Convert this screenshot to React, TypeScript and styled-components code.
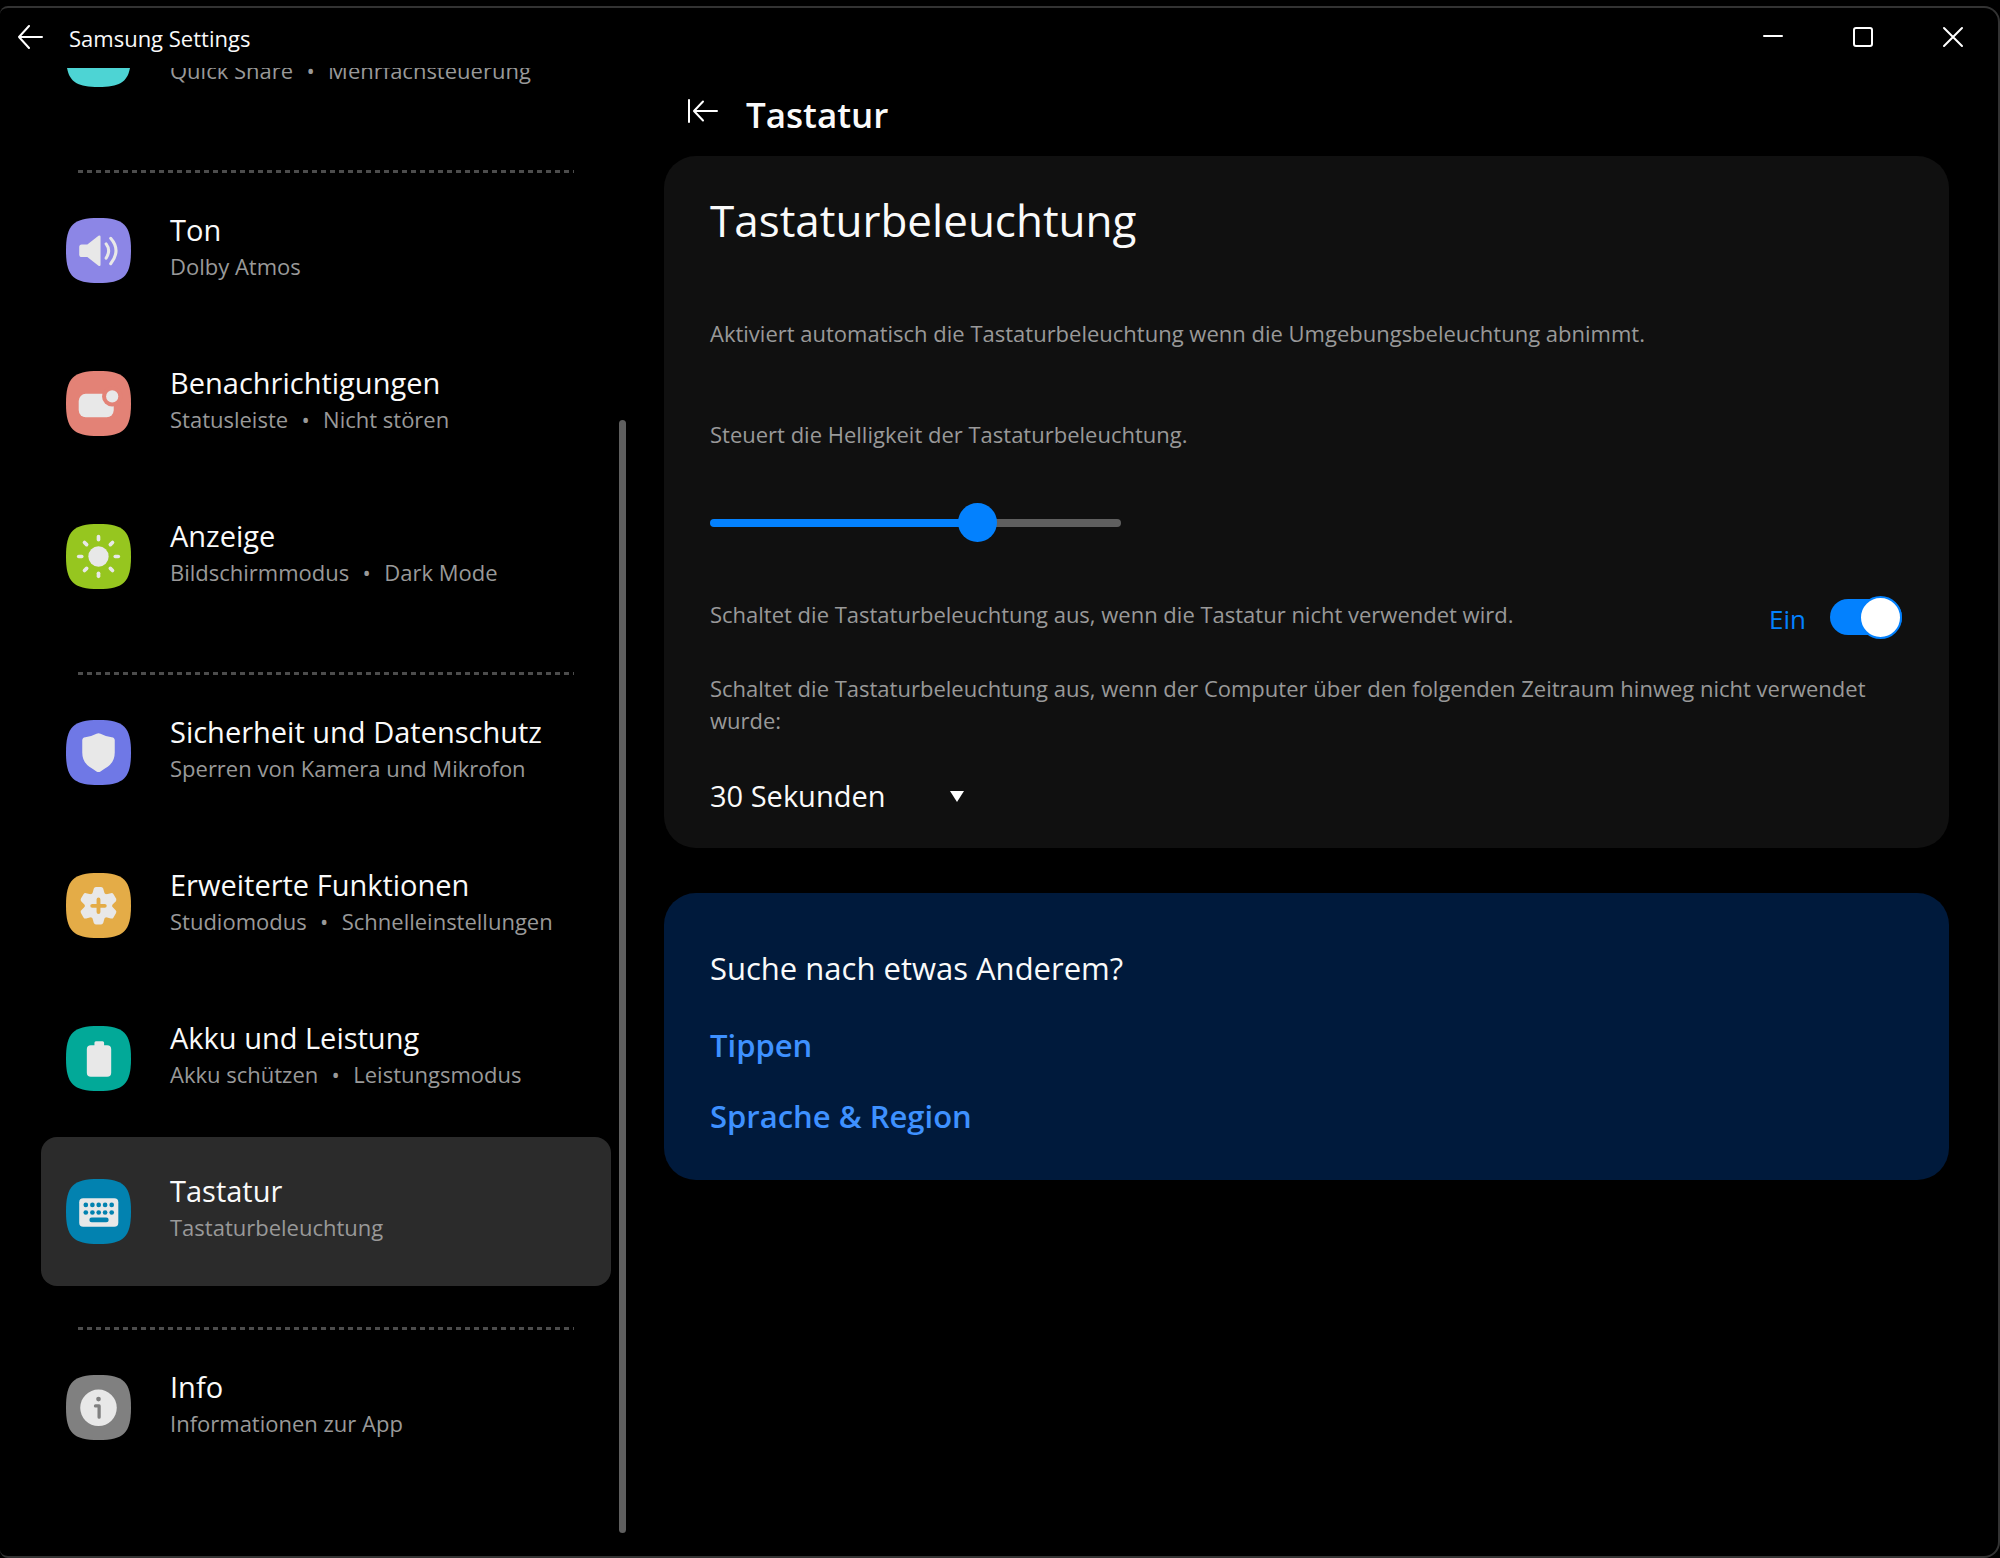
import React, { useLayoutEffect, useRef, useState } from "react";
import styled, { createGlobalStyle } from "styled-components";

const color = {
  bg: "#000000",
  frame: "#333333",
  card: "#101010",
  selected: "#2b2b2b",
  related: "#001a3c",
  text: "#fafafa",
  muted: "#999999",
  accent: "#0381fe",
  link: "#3e91ff",
  glyph: "#e8e8e8",
  track: "#5f5f5f",
};

const GlobalStyle = createGlobalStyle`
  *, *::before, *::after { box-sizing: border-box; }
  html, body { margin: 0; background: ${color.bg}; }
  body, button, select, input {
    font-family: "Open Sans", "Noto Sans", sans-serif;
    color: ${color.text};
  }
`;

const Window = styled.div`
  display: flex;
  flex-direction: column;
  height: calc(100vh - 6px);
  margin-top: 6px;
  background: ${color.bg};
  border: 2px solid ${color.frame};
  border-left: 0;
  border-radius: 8px 16px 16px 8px;
  overflow: hidden;
`;

const TitleBar = styled.header`
  display: flex;
  align-items: center;
  flex: none;
  height: 60px;
  padding: 0 12px;
`;

const IconButton = styled.button`
  display: inline-flex;
  align-items: center;
  justify-content: center;
  width: 36px;
  height: 44px;
  padding: 0 0 2px;
  border: 0;
  background: none;
  cursor: pointer;
`;

const AppTitle = styled.span`
  flex: 1;
  padding-left: 21px;
  font-size: 22px;
  line-height: 32px;
`;

const WindowControls = styled.div`
  display: flex;
  gap: 54px;
  padding-right: 15px;
`;

const Body = styled.div`
  display: grid;
  grid-template-columns: 628px minmax(0, 1fr);
  flex: 1;
  min-height: 0;
`;

const Sidebar = styled.div`
  display: flex;
  min-height: 0;
`;

const Nav = styled.nav`
  flex: 1;
  overflow-y: auto;
  scrollbar-width: none;
  padding: 0 8px 74px 41px;
`;

const ScrollRail = styled.div`
  display: flex;
  flex-direction: column;
  justify-content: flex-end;
  width: 9px;
  padding: 0 2px 23px 0;
`;

const ScrollThumb = styled.div`
  height: 76%;
  border-radius: 4px;
  background: ${color.track};
`;

const Group = styled.ul`
  display: flex;
  flex-direction: column;
  gap: 4px;
  margin: 0;
  padding: 0;
  list-style: none;
`;

const Separator = styled.hr`
  height: 3px;
  margin: 41px 37px 3px;
  border: 0;
  background: repeating-linear-gradient(90deg, #4c4c4c 0 5px, transparent 5px 9px);
`;

const NavButton = styled.button<{ $selected: boolean }>`
  display: flex;
  align-items: center;
  gap: 39px;
  width: 100%;
  height: 149px;
  padding: 0 25px;
  border: 0;
  border-radius: 16px;
  background: ${(p) => (p.$selected ? color.selected : "transparent")};
  text-align: left;
  cursor: pointer;
`;

const NavText = styled.span`
  display: flex;
  flex-direction: column;
  padding-bottom: 10px;
  white-space: nowrap;
`;

const NavTitle = styled.span`
  min-height: 40px;
  font-size: 29px;
  line-height: 40px;
`;

const NavHint = styled.span`
  display: flex;
  font-size: 22px;
  line-height: 32px;
  color: ${color.muted};
`;

const Dot = styled.span`
  width: 35px;
  text-align: center;
`;

const TileSvg = styled.svg`
  flex: none;
  width: 65px;
  height: 65px;
`;

const Main = styled.main`
  padding: 0 49px 0 36px;
  overflow-y: auto;
  scrollbar-width: none;
`;

const PageHeader = styled.div`
  display: flex;
  align-items: center;
  gap: 25px;
  height: 88px;
  padding-left: 21px;
`;

const PageTitle = styled.h1`
  margin: 0;
  padding-top: 5px;
  font-size: 35px;
  font-weight: 600;
  line-height: 48px;
`;

const Card = styled.section`
  display: flex;
  flex-direction: column;
  padding: 32px 47px 32px 46px;
  border-radius: 32px;
  background: ${color.card};
`;

const CardTitle = styled.h2`
  margin: 0 0 65px;
  font-size: 44px;
  font-weight: 400;
  line-height: 64px;
`;

const Description = styled.p`
  margin: 0;
  font-size: 22px;
  line-height: 32px;
  color: ${color.muted};
`;

const SliderField = styled.label`
  display: flex;
  flex-direction: column;
  gap: 53px;
  margin-top: 69px;
`;

const Slider = styled.input`
  appearance: none;
  width: 411px;
  height: 39px;
  margin: 0;
  background: none;
  cursor: pointer;

  &::-webkit-slider-runnable-track {
    height: 8px;
    border-radius: 4px;
    background: linear-gradient(90deg, ${color.accent} 0 65%, ${color.track} 65%);
  }

  &::-webkit-slider-thumb {
    appearance: none;
    width: 39px;
    height: 39px;
    margin-top: -16px;
    border-radius: 50%;
    background: ${color.accent};
  }
`;

const ToggleField = styled.label`
  display: flex;
  align-items: center;
  height: 44px;
  margin-top: 53px;
`;

const ToggleText = styled(Description).attrs({ as: "span" })`
  flex: 1;
  padding-bottom: 6px;
`;

const ToggleState = styled.span`
  padding: 4px 24px 0 0;
  font-size: 26px;
  line-height: 32px;
  color: ${color.accent};
`;

const Toggle = styled.input`
  appearance: none;
  display: flex;
  align-items: center;
  justify-content: flex-end;
  width: 72px;
  height: 36px;
  margin: 0;
  border-radius: 18px;
  background: ${color.accent};
  cursor: pointer;

  &::before {
    content: "";
    flex: none;
    width: 43px;
    height: 43px;
    border: 2px solid ${color.accent};
    border-radius: 50%;
    background: #ffffff;
  }

  &:not(:checked) {
    justify-content: flex-start;
    background: ${color.track};
  }
`;

const SelectField = styled.label`
  display: flex;
  flex-direction: column;
  align-items: flex-start;
  gap: 40px;
  margin-top: 33px;
`;

const SelectBox = styled.span`
  display: grid;
  align-items: center;
  width: 254px;

  & > * {
    grid-area: 1 / 1;
  }

  & > svg {
    justify-self: end;
    pointer-events: none;
  }
`;

const Select = styled.select`
  appearance: none;
  width: 100%;
  height: 40px;
  padding: 0;
  border: 0;
  background: none;
  font-size: 29px;
  line-height: 40px;
  cursor: pointer;

  option {
    background: ${color.card};
  }
`;

const RelatedCard = styled(Card)`
  align-items: flex-start;
  gap: 27px;
  margin-top: 45px;
  padding: 53px 47px 42px 46px;
  background: ${color.related};
`;

const RelatedTitle = styled.h2`
  margin: 0 0 6px;
  font-size: 31px;
  font-weight: 400;
  line-height: 44px;
`;

const RelatedLink = styled.a`
  font-size: 31px;
  font-weight: 600;
  line-height: 44px;
  color: ${color.link};
  text-decoration: none;
`;

const StrokeIcon = ({ w, h, d }: { w: number; h: number; d: string }) => (
  <svg width={w} height={h} viewBox={`0 0 ${w} ${h}`} fill="none" stroke="#fff" strokeWidth="2" strokeLinecap="round" strokeLinejoin="round" aria-hidden="true">
    <path d={d} />
  </svg>
);

const Tile = ({ fill, children }: { fill: string; children?: React.ReactNode }) => (
  <TileSvg viewBox="0 0 64 64" aria-hidden="true">
    <path d="M32 0C57 0 64 7 64 32S57 64 32 64 0 57 0 32 7 0 32 0Z" fill={fill} />
    {children}
  </TileSvg>
);

const g = color.glyph;

const icons = {
  devices: (
    <Tile fill="#4dd4d4">
      <rect x="16" y="16" width="32" height="24" rx="4" fill={g} />
    </Tile>
  ),
  sound: (
    <Tile fill="#8c86e6">
      <path d="M15.500 26H21L32 17.500Q34 16.500 34 18.500V46Q34 48 32 47L21 38.500H15.500Q13 38.500 13 36V28.500Q13 26 15.500 26Z" fill={g} />
      <path d="M39.500 25.500Q44.500 32 39.500 39.500M44 20Q54.500 32 44 45" fill="none" stroke={g} strokeWidth="3" strokeLinecap="round" />
    </Tile>
  ),
  notifications: (
    <Tile fill="#e38276">
      <rect x="12.500" y="22.500" width="34.500" height="23" rx="7" fill={g} />
      <circle cx="45.500" cy="25" r="10" fill="#e38276" />
      <circle cx="45.500" cy="25" r="6" fill={g} />
    </Tile>
  ),
  display: (
    <Tile fill="#96c61f">
      <circle cx="32" cy="32" r="10" fill={g} />
      {[0, 45, 90, 135, 180, 225, 270, 315].map((a) => (
        <path key={a} d="M32 12.500V15.500" transform={`rotate(${a} 32 32)`} stroke={g} strokeWidth="3.600" strokeLinecap="round" />
      ))}
    </Tile>
  ),
  security: (
    <Tile fill="#6f78e6">
      <path d="M30 13.600Q32 12.400 34 13.600Q39 16.400 45 16.900Q48 17.200 48 20V32Q48 41 41 46Q37 48.500 34 50.600Q32 51.800 30 50.600Q27 48.500 23 46Q16 41 16 32V20Q16 17.200 19 16.900Q25 16.400 30 13.600Z" fill={g} />
    </Tile>
  ),
  advanced: (
    <Tile fill="#e4ac47">
      <circle cx="32" cy="32.300" r="13.500" fill={g} />
      {[0, 60, 120, 180, 240, 300].map((a) => (
        <path key={a} d="M25.500 22L27.300 15.500Q27.800 13.800 29.500 13.800H34.500Q36.200 13.800 36.700 15.500L38.500 22Z" transform={`rotate(${a} 32 32.300)`} fill={g} />
      ))}
      <path d="M25.800 32.300H38.200M32 26.100V38.500" stroke="#e4ac47" strokeWidth="3.800" strokeLinecap="round" />
    </Tile>
  ),
  battery: (
    <Tile fill="#02a998">
      <path d="M29.500 15H36Q37.500 15 37.500 16.500V19H40.500Q44.500 19 44.500 23V46Q44.500 50 40.500 50H24.500Q20.500 50 20.500 46V23Q20.500 19 24.500 19H28V16.500Q28 15 29.500 15Z" fill={g} />
    </Tile>
  ),
  keyboard: (
    <Tile fill="#0282b0">
      <rect x="13" y="19" width="38.500" height="28" rx="4" fill={g} />
      {[25.5, 33].map((y) => [19.5, 26, 32.2, 38.5, 45].map((x) => <circle key={`${x}-${y}`} cx={x} cy={y} r="2.300" fill="#0282b0" />))}
      <rect x="23" y="38" width="19" height="4.600" rx="2.300" fill="#0282b0" />
    </Tile>
  ),
  info: (
    <Tile fill="#808080">
      <circle cx="32" cy="32.300" r="18" fill={g} />
      <circle cx="32" cy="23.700" r="2.300" fill="#808080" />
      <path d="M29 30.500H32.600V41.500" fill="none" stroke="#808080" strokeWidth="3.200" strokeLinecap="round" strokeLinejoin="round" />
    </Tile>
  ),
};

type NavItem = { id: keyof typeof icons; title?: string; hints: string[] };

const navGroups: NavItem[][] = [
  [{ id: "devices", hints: ["Quick Share", "Mehrfachsteuerung"] }],
  [
    { id: "sound", title: "Ton", hints: ["Dolby Atmos"] },
    { id: "notifications", title: "Benachrichtigungen", hints: ["Statusleiste", "Nicht stören"] },
    { id: "display", title: "Anzeige", hints: ["Bildschirmmodus", "Dark Mode"] },
  ],
  [
    { id: "security", title: "Sicherheit und Datenschutz", hints: ["Sperren von Kamera und Mikrofon"] },
    { id: "advanced", title: "Erweiterte Funktionen", hints: ["Studiomodus", "Schnelleinstellungen"] },
    { id: "battery", title: "Akku und Leistung", hints: ["Akku schützen", "Leistungsmodus"] },
    { id: "keyboard", title: "Tastatur", hints: ["Tastaturbeleuchtung"] },
  ],
  [{ id: "info", title: "Info", hints: ["Informationen zur App"] }],
];

export default function App() {
  const navRef = useRef<HTMLElement>(null);
  const [selected, setSelected] = useState<string>("keyboard");
  const [autoOff, setAutoOff] = useState(true);

  // Open with the list scrolled to its end.
  useLayoutEffect(() => {
    if (navRef.current) navRef.current.scrollTop = navRef.current.scrollHeight;
  }, []);

  return (
    <>
      <GlobalStyle />
      <Window>
        <TitleBar>
          <IconButton aria-label="Zurück">
            <StrokeIcon w={26} h={24} d="M25 12H2M12 1L2 12L12 23" />
          </IconButton>
          <AppTitle>Samsung Settings</AppTitle>
          <WindowControls>
            <IconButton aria-label="Minimieren">
              <StrokeIcon w={22} h={22} d="M2 10H20" />
            </IconButton>
            <IconButton aria-label="Maximieren">
              <StrokeIcon w={22} h={22} d="M4 2H18Q20 2 20 4V18Q20 20 18 20H4Q2 20 2 18V4Q2 2 4 2Z" />
            </IconButton>
            <IconButton aria-label="Schließen">
              <StrokeIcon w={22} h={22} d="M2 2L20 20M20 2L2 20" />
            </IconButton>
          </WindowControls>
        </TitleBar>

        <Body>
          <Sidebar>
            <Nav ref={navRef} aria-label="Einstellungen">
              {navGroups.map((group, i) => (
                <React.Fragment key={group[0].id}>
                  {i > 0 && <Separator />}
                  <Group>
                    {group.map((item) => (
                      <li key={item.id}>
                        <NavButton $selected={item.id === selected} onClick={() => setSelected(item.id)}>
                          {icons[item.id]}
                          <NavText>
                            <NavTitle>{item.title}</NavTitle>
                            <NavHint>
                              {item.hints.map((hint, n) => (
                                <React.Fragment key={hint}>
                                  {n > 0 && <Dot>•</Dot>}
                                  <span>{hint}</span>
                                </React.Fragment>
                              ))}
                            </NavHint>
                          </NavText>
                        </NavButton>
                      </li>
                    ))}
                  </Group>
                </React.Fragment>
              ))}
            </Nav>
            <ScrollRail>
              <ScrollThumb />
            </ScrollRail>
          </Sidebar>

          <Main>
            <PageHeader>
              <IconButton aria-label="Seitenleiste einklappen">
                <StrokeIcon w={32} h={26} d="M2 2V24M30 13H8M16 3.500L7 13L16 22.500" />
              </IconButton>
              <PageTitle>Tastatur</PageTitle>
            </PageHeader>

            <Card>
              <CardTitle>Tastaturbeleuchtung</CardTitle>
              <Description>
                Aktiviert automatisch die Tastaturbeleuchtung wenn die Umgebungsbeleuchtung abnimmt.
              </Description>
              <SliderField>
                <Description as="span">Steuert die Helligkeit der Tastaturbeleuchtung.</Description>
                <Slider type="range" min={0} max={3} step={1} defaultValue={2} />
              </SliderField>
              <ToggleField>
                <ToggleText>Schaltet die Tastaturbeleuchtung aus, wenn die Tastatur nicht verwendet wird.</ToggleText>
                <ToggleState>{autoOff ? "Ein" : "Aus"}</ToggleState>
                <Toggle type="checkbox" role="switch" checked={autoOff} onChange={(e) => setAutoOff(e.target.checked)} />
              </ToggleField>
              <SelectField>
                <Description as="span">
                  Schaltet die Tastaturbeleuchtung aus, wenn der Computer über den folgenden Zeitraum hinweg nicht verwendet wurde:
                </Description>
                <SelectBox>
                  <Select defaultValue="30">
                    <option value="30">30 Sekunden</option>
                  </Select>
                  <svg width="14" height="11" viewBox="0 0 14 11" aria-hidden="true">
                    <path d="M0 0H14L7 11Z" fill="#fff" />
                  </svg>
                </SelectBox>
              </SelectField>
            </Card>

            <RelatedCard>
              <RelatedTitle>Suche nach etwas Anderem?</RelatedTitle>
              <RelatedLink href="#tippen">Tippen</RelatedLink>
              <RelatedLink href="#sprache">Sprache &amp; Region</RelatedLink>
            </RelatedCard>
          </Main>
        </Body>
      </Window>
    </>
  );
}
